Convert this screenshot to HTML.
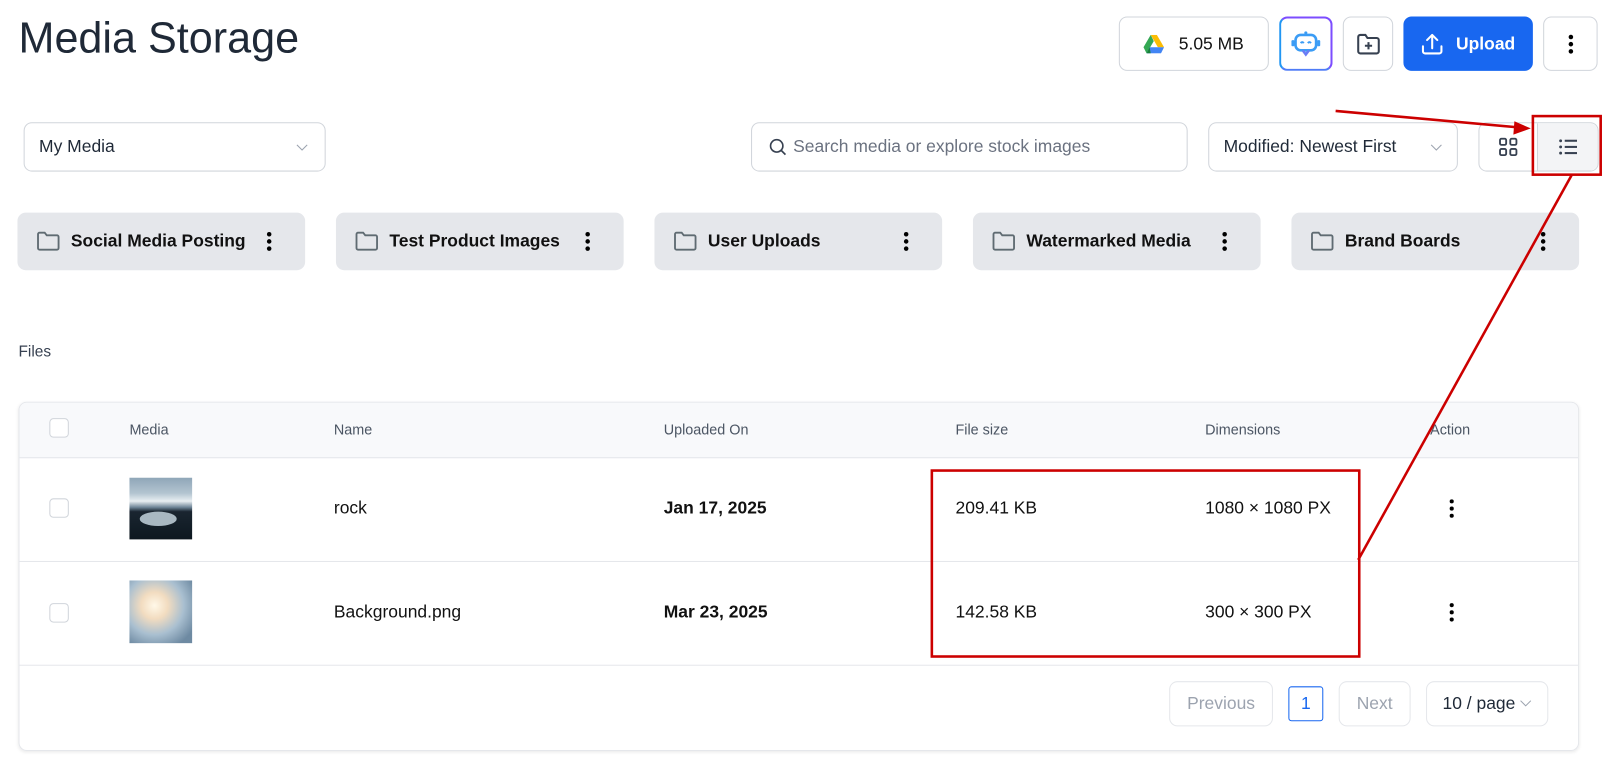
<!DOCTYPE html>
<html><head><meta charset="utf-8"><style>
*{box-sizing:border-box;margin:0;padding:0}
html,body{width:1611px;height:765px;overflow:hidden;background:#fff}
#w{position:absolute;left:0;top:0;width:1568px;height:745px;transform:scale(1.0274);transform-origin:0 0;font-family:"Liberation Sans",Arial,sans-serif;color:#111827}
.a{position:absolute}
.btn{position:absolute;border:1px solid #d1d5db;border-radius:8px;background:#fff;display:flex;align-items:center;justify-content:center}
.fold{position:absolute;top:207px;width:280px;height:56px;background:#e5e7eb;border-radius:8px;display:flex;align-items:center;padding-left:18px;font-size:17px;font-weight:bold;color:#111}
.fold svg{margin-right:10px}
.fold .d{position:absolute;right:22px;top:18px}
.th{position:absolute;top:410px;font-size:14px;color:#4b5563}
.cb{position:absolute;left:48px;width:19px;height:19px;border:1px solid #d1d5db;border-radius:4px;background:#fff}
.td{position:absolute;font-size:17px;color:#111}
</style></head><body><div id="w">
<div class="a" style="left:18px;top:13px;font-size:42px;color:#1f2937">Media Storage</div>

<div class="btn" style="left:1089px;top:16px;width:146px;height:53px;font-size:17px;color:#111">
<svg width="20" height="18" viewBox="0 0 20 18" style="margin-right:14px"><path d="M7 0h6l7 12h-6z" fill="#fbbc04"/><path d="M7 0L0 12l3 6 7-12z" fill="#34a853"/><path d="M3 18h14l3-6H6z" fill="#4285f4"/><path d="M6 12l-3 6h4z" fill="#188038"/></svg>5.05 MB</div>
<div class="btn" style="left:1245px;top:16px;width:52px;height:53px;border:2px solid #7c4dff;border-left-color:#2196f3;border-bottom-color:#4f7cf7">
<svg width="30" height="30" viewBox="0 0 30 30"><rect x="5" y="6" width="20" height="15" rx="5" fill="none" stroke="#3b9cf5" stroke-width="2.5"/><path d="M12 21l3 4 3-4" fill="none" stroke="#6a7cf5" stroke-width="2.5"/><path d="M10 14q1.5-2 3 0M17 14q1.5-2 3 0" fill="none" stroke="#3b9cf5" stroke-width="2"/><rect x="1" y="11" width="3" height="6" rx="1" fill="#3b9cf5"/><rect x="26" y="11" width="3" height="6" rx="1" fill="#3b9cf5"/><circle cx="15" cy="4" r="1.5" fill="#3b9cf5"/></svg></div>
<div class="btn" style="left:1307px;top:16px;width:49px;height:53px">
<svg width="24" height="22" viewBox="0 0 24 22"><path d="M2 4a2 2 0 012-2h5l2 3h9a2 2 0 012 2v11a2 2 0 01-2 2H4a2 2 0 01-2-2z" fill="none" stroke="#374151" stroke-width="2"/><path d="M12 9v7M8.5 12.5h7" stroke="#374151" stroke-width="2"/></svg></div>
<div class="btn" style="left:1366px;top:16px;width:126px;height:53px;background:#1867f0;border-color:#1867f0;color:#fff;font-size:17px;font-weight:bold">
<svg width="22" height="22" viewBox="0 0 22 22" style="margin-right:12px"><path d="M2 13v5a2 2 0 002 2h14a2 2 0 002-2v-5M11 15V2M6 7l5-5 5 5" fill="none" stroke="#fff" stroke-width="2" stroke-linecap="round" stroke-linejoin="round"/></svg>Upload</div>
<div class="btn" style="left:1502px;top:16px;width:53px;height:53px"><svg width="6" height="20"><circle cx="3" cy="3" r="2.2"/><circle cx="3" cy="10" r="2.2"/><circle cx="3" cy="17" r="2.2"/></svg></div>

<div class="btn" style="left:23px;top:119px;width:294px;height:48px;justify-content:flex-start;padding-left:14px;font-size:17px;color:#1f2937">My Media
<svg class="a" style="right:16px;top:20px" width="12" height="8"><path d="M1 1l5 5 5-5" fill="none" stroke="#9ca3af"/></svg></div>
<div class="btn" style="left:731px;top:119px;width:425px;height:48px;justify-content:flex-start;padding-left:16px;font-size:17px;color:#6b7280">
<svg width="18" height="18" viewBox="0 0 18 18" style="margin-right:6px"><circle cx="8" cy="8" r="6" fill="none" stroke="#374151" stroke-width="1.6"/><path d="M12.5 12.5l4 4" stroke="#374151" stroke-width="1.6"/></svg>Search media or explore stock images</div>
<div class="btn" style="left:1176px;top:119px;width:243px;height:48px;justify-content:flex-start;padding-left:14px;font-size:17px;color:#1f2937">Modified: Newest First
<svg class="a" style="right:14px;top:20px" width="12" height="8"><path d="M1 1l5 5 5-5" fill="none" stroke="#9ca3af"/></svg></div>
<div class="btn" style="left:1439px;top:119px;width:117px;height:48px;border-radius:8px"></div>
<div class="a" style="left:1496px;top:120px;width:59px;height:46px;background:#f3f4f6;border-left:1px solid #d1d5db;border-radius:0 8px 8px 0"></div>
<svg class="a" style="left:1459px;top:134px" width="18" height="18" viewBox="0 0 18 18"><g fill="none" stroke="#374151" stroke-width="1.8"><rect x="1" y="1" width="6" height="6" rx="1.5"/><rect x="11" y="1" width="6" height="6" rx="1.5"/><rect x="1" y="11" width="6" height="6" rx="1.5"/><rect x="11" y="11" width="6" height="6" rx="1.5"/></g></svg>
<svg class="a" style="left:1517px;top:135px" width="18" height="16" viewBox="0 0 18 16"><g fill="#374151"><circle cx="2" cy="2" r="1.4"/><circle cx="2" cy="8" r="1.4"/><circle cx="2" cy="14" r="1.4"/><rect x="6" y="1" width="12" height="2"/><rect x="6" y="7" width="12" height="2"/><rect x="6" y="13" width="12" height="2"/></g></svg>

<div class="fold" style="left:17px"><svg width="24" height="20" viewBox="0 0 24 20"><path d="M2 3a1.5 1.5 0 011.5-1.5h5l2 2.5h10a1.5 1.5 0 011.5 1.5v11a1.5 1.5 0 01-1.5 1.5h-17A1.5 1.5 0 012 16.5z" fill="none" stroke="#5f6b72" stroke-width="1.8"/></svg>Social Media Posting<svg class="d" width="6" height="20"><circle cx="3" cy="3" r="2.2"/><circle cx="3" cy="10" r="2.2"/><circle cx="3" cy="17" r="2.2"/></svg></div>
<div class="fold" style="left:327px"><svg width="24" height="20" viewBox="0 0 24 20"><path d="M2 3a1.5 1.5 0 011.5-1.5h5l2 2.5h10a1.5 1.5 0 011.5 1.5v11a1.5 1.5 0 01-1.5 1.5h-17A1.5 1.5 0 012 16.5z" fill="none" stroke="#5f6b72" stroke-width="1.8"/></svg>Test Product Images<svg class="d" width="6" height="20"><circle cx="3" cy="3" r="2.2"/><circle cx="3" cy="10" r="2.2"/><circle cx="3" cy="17" r="2.2"/></svg></div>
<div class="fold" style="left:637px"><svg width="24" height="20" viewBox="0 0 24 20"><path d="M2 3a1.5 1.5 0 011.5-1.5h5l2 2.5h10a1.5 1.5 0 011.5 1.5v11a1.5 1.5 0 01-1.5 1.5h-17A1.5 1.5 0 012 16.5z" fill="none" stroke="#5f6b72" stroke-width="1.8"/></svg>User Uploads<svg class="d" width="6" height="20"><circle cx="3" cy="3" r="2.2"/><circle cx="3" cy="10" r="2.2"/><circle cx="3" cy="17" r="2.2"/></svg></div>
<div class="fold" style="left:947px"><svg width="24" height="20" viewBox="0 0 24 20"><path d="M2 3a1.5 1.5 0 011.5-1.5h5l2 2.5h10a1.5 1.5 0 011.5 1.5v11a1.5 1.5 0 01-1.5 1.5h-17A1.5 1.5 0 012 16.5z" fill="none" stroke="#5f6b72" stroke-width="1.8"/></svg>Watermarked Media<svg class="d" width="6" height="20"><circle cx="3" cy="3" r="2.2"/><circle cx="3" cy="10" r="2.2"/><circle cx="3" cy="17" r="2.2"/></svg></div>
<div class="fold" style="left:1257px"><svg width="24" height="20" viewBox="0 0 24 20"><path d="M2 3a1.5 1.5 0 011.5-1.5h5l2 2.5h10a1.5 1.5 0 011.5 1.5v11a1.5 1.5 0 01-1.5 1.5h-17A1.5 1.5 0 012 16.5z" fill="none" stroke="#5f6b72" stroke-width="1.8"/></svg>Brand Boards<svg class="d" width="6" height="20"><circle cx="3" cy="3" r="2.2"/><circle cx="3" cy="10" r="2.2"/><circle cx="3" cy="17" r="2.2"/></svg></div>

<div class="a" style="left:18px;top:334px;font-size:15px;color:#374151">Files</div>

<div class="a" style="left:18px;top:391px;width:1519px;height:340px;border:1px solid #e5e7eb;border-radius:8px;box-shadow:0 1px 3px rgba(0,0,0,.08);overflow:hidden">
<div class="a" style="left:0;top:0;width:100%;height:54px;background:#f8f9fb;border-bottom:1px solid #e5e7eb"></div>
<div class="a" style="left:0;top:154px;width:100%;border-top:1px solid #e5e7eb"></div>
<div class="a" style="left:0;top:255px;width:100%;border-top:1px solid #e5e7eb"></div>
</div>
<div class="cb" style="top:407px"></div>
<div class="th" style="left:126px">Media</div><div class="th" style="left:325px">Name</div><div class="th" style="left:646px">Uploaded On</div><div class="th" style="left:930px">File size</div><div class="th" style="left:1173px">Dimensions</div><div class="th" style="left:1392px">Action</div>

<div class="cb" style="top:485px"></div>
<div class="a" style="left:126px;top:465px;width:61px;height:60px;background:linear-gradient(#8fa6b8 0%,#b3c4d0 25%,#e8eef2 38%,#6d8496 48%,#1a2530 55%,#0d1820 100%)"><div class="a" style="left:10px;top:33px;width:36px;height:14px;border-radius:50%;background:#a9b8c2"></div></div>
<div class="td" style="left:325px;top:485px">rock</div>
<div class="td" style="left:646px;top:485px;font-weight:bold">Jan 17, 2025</div>
<div class="td" style="left:930px;top:485px">209.41 KB</div>
<div class="td" style="left:1173px;top:485px">1080 × 1080 PX</div>
<svg class="a" style="left:1410px;top:485px" width="6" height="20"><circle cx="3" cy="3" r="2"/><circle cx="3" cy="10" r="2"/><circle cx="3" cy="17" r="2"/></svg>

<div class="cb" style="top:587px"></div>
<div class="a" style="left:126px;top:565px;width:61px;height:61px;background:radial-gradient(circle at 40% 40%,#fff8e8 0%,#f2dcc0 25%,#a9bfd0 55%,#6e8aa2 85%)"></div>
<div class="td" style="left:325px;top:586px">Background.png</div>
<div class="td" style="left:646px;top:586px;font-weight:bold">Mar 23, 2025</div>
<div class="td" style="left:930px;top:586px">142.58 KB</div>
<div class="td" style="left:1173px;top:586px">300 × 300 PX</div>
<svg class="a" style="left:1410px;top:586px" width="6" height="20"><circle cx="3" cy="3" r="2"/><circle cx="3" cy="10" r="2"/><circle cx="3" cy="17" r="2"/></svg>

<div class="btn" style="left:1138px;top:663px;width:101px;height:44px;border-color:#e5e7eb;font-size:17px;color:#9ca3af">Previous</div>
<div class="btn" style="left:1254px;top:668px;width:34px;height:34px;border-color:#1867f0;border-radius:3px;font-size:17px;color:#1867f0">1</div>
<div class="btn" style="left:1303px;top:663px;width:70px;height:44px;border-color:#e5e7eb;font-size:17px;color:#9ca3af">Next</div>
<div class="btn" style="left:1388px;top:663px;width:119px;height:44px;border-color:#e5e7eb;font-size:17px;color:#1f2937">10 / page<svg width="12" height="8" style="margin-left:4px"><path d="M1 1l5 5 5-5" fill="none" stroke="#9ca3af"/></svg></div>

<svg class="a" style="left:0;top:0" width="1568" height="745">
<g stroke="#cc0000" stroke-width="2.5" fill="none">
<rect x="1492" y="113" width="66" height="57"/>
<rect x="907" y="458" width="416" height="181"/>
<path d="M1300 108L1478 124"/>
<path d="M1530 170L1322 545"/>
</g>
<path d="M1490 125l-16-7 -1 13z" fill="#cc0000"/>
</svg>
</div></body></html>
